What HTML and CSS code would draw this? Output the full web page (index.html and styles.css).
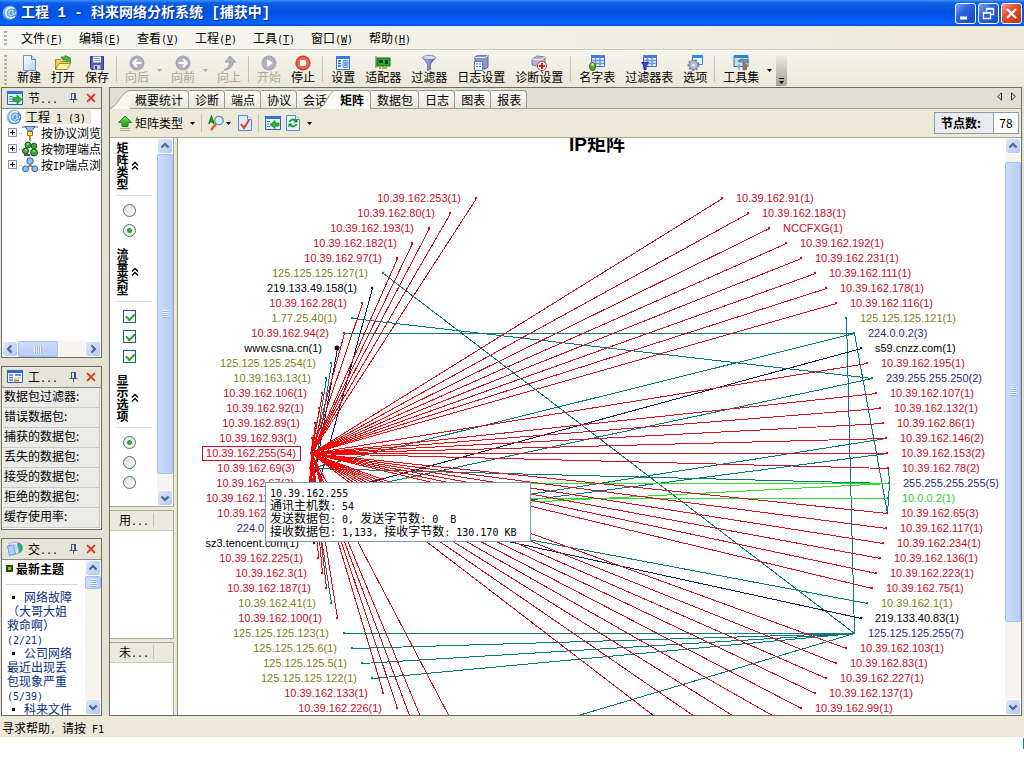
FILE: index.html
```html
<!DOCTYPE html>
<html lang="zh-CN">
<head>
<meta charset="utf-8">
<title>工程 1 - 科来网络分析系统</title>
<link rel="stylesheet" href="styles.css">
</head>
<body>
<svg class="defs" aria-hidden="true">
  <defs>
    <linearGradient id="gBlue" x1="0" y1="0" x2="1" y2="1"><stop offset="0" stop-color="#9fd8f8"/><stop offset="1" stop-color="#1f6fc4"/></linearGradient>
    <linearGradient id="gSteel" x1="0" y1="0" x2="1" y2="0"><stop offset="0" stop-color="#c9cdf0"/><stop offset="1" stop-color="#4a549c"/></linearGradient>
    <linearGradient id="gPage" x1="0" y1="0" x2="1" y2="1"><stop offset="0" stop-color="#fff"/><stop offset="1" stop-color="#b4d4f4"/></linearGradient>
    <linearGradient id="gGreen" x1="0" y1="0" x2="0" y2="1"><stop offset="0" stop-color="#7be05a"/><stop offset="1" stop-color="#1c9a1c"/></linearGradient>
    <radialGradient id="gGray"><stop offset="0" stop-color="#c9c5d0"/><stop offset="1" stop-color="#a5a2b4"/></radialGradient>
  </defs>
  <symbol id="i-globe" viewBox="0 0 16 16"><circle cx="8" cy="8" r="7.3" fill="url(#gBlue)"/><path d="M12 3.500C8 1 3 4 4 9s7 5 9 2" fill="none" stroke="#fff" stroke-width="1.300"/><path d="M11 6C9 4 6 6 7 9s4 2 4 0V5.500M11 9c1 2 3 0 2.500-2" fill="none" stroke="#e8f8ff"/></symbol>
  <symbol id="i-new" viewBox="0 0 16 16"><path d="M2.500.5h8l4 4v11h-12z" fill="url(#gPage)" stroke="#6f8fc0"/><path d="M10.500.5v4h4" fill="#dcecff" stroke="#5c7cb0"/></symbol>
  <symbol id="i-open" viewBox="0 0 16 16"><path d="M.5 14.500v-10h5l1 2h6v3" fill="#f2cf58" stroke="#a88424"/><path d="M.5 14.500l3.500-6h11.500l-3.500 6z" fill="#fff0a4" stroke="#b08c28"/><path d="M6 2h4V.5L15.500 3v5l-2-2-3-1H8z" fill="#4cb83c" stroke="#1c7a1c" stroke-width=".7"/></symbol>
  <symbol id="i-save" viewBox="0 0 16 16"><path d="M1.500 1.500h13v13h-12l-1-1z" fill="#5358b4" stroke="#343a88"/><path d="M4 1.500h8v6H4z" fill="#f2f3ff"/><path d="M5 3.500h6M5 5.500h6" stroke="#9498cc"/><path d="M4.500 10h7v4.500h-7z" fill="#c7cae8"/><path d="M6 11h2v3H6z" fill="#3a4090"/></symbol>
  <symbol id="i-back" viewBox="0 0 16 16"><circle cx="8" cy="8" r="7.500" fill="url(#gGray)"/><path d="M12.500 8H5M8 4L4.200 8 8 12" fill="none" stroke="#fff" stroke-width="2"/></symbol>
  <symbol id="i-fwd" viewBox="0 0 16 16"><circle cx="8" cy="8" r="7.500" fill="url(#gGray)"/><path d="M3.500 8H11M8 4l3.800 4L8 12" fill="none" stroke="#fff" stroke-width="2"/></symbol>
  <symbol id="i-up" viewBox="0 0 16 16"><path d="M9 1l6 6h-3c0 4-3 8-9 8 4-2 5.500-4 5.500-8H4z" fill="#b3b0c0" stroke="#918fa4" stroke-width=".8"/></symbol>
  <symbol id="i-play" viewBox="0 0 16 16"><circle cx="8" cy="8" r="7.500" fill="url(#gGray)"/><path d="M6 4l6 4-6 4z" fill="#fff"/></symbol>
  <symbol id="i-stop" viewBox="0 0 16 16"><circle cx="8" cy="8" r="7.600" fill="#d8452c"/><circle cx="8" cy="8" r="5.800" fill="#ee6a4c"/><rect x="5" y="5" width="6" height="6" rx="1" fill="#fff"/></symbol>
  <symbol id="i-set" viewBox="0 0 16 16"><path d="M1.500 1.500h13v13h-13z" fill="#fff" stroke="#2a78cc"/><path d="M1 1h14v3H1z" fill="#2f7ee0"/><path d="M3 6h3M3 8.500h3M3 11h3" stroke="#2360b4" stroke-width="1.500"/><path d="M8 5.500h5v7H8z" fill="#b8d8fa" stroke="#5b94dc"/><path d="M9 8h3M9 10h3" stroke="#2f6ec0"/></symbol>
  <symbol id="i-nic" viewBox="0 0 16 16"><path d="M1 1v12" stroke="#888" stroke-width="1.500"/><path d="M2 3h13v8H2z" fill="#2fa43a" stroke="#106a1c"/><path d="M4 5h4v3H4zM10 5h3v4h-3z" fill="#143f1b"/><path d="M4 12h2v2H4zM7 12h5v2H7z" fill="#c8a430"/></symbol>
  <symbol id="i-filter" viewBox="0 0 16 16"><path d="M1.500 2.500L6.500 9v6.500l3-1V9l5-6.500z" fill="url(#gSteel)" stroke="#4d5796" stroke-width=".7"/><ellipse cx="8" cy="2.500" rx="6.600" ry="2" fill="#dfe2fa" stroke="#6870a8" stroke-width=".8"/></symbol>
  <symbol id="i-log" viewBox="0 0 16 16"><path d="M2 2l3-2h10v12l-3 2H2z" fill="#8e97cc" stroke="#5b659f"/><path d="M2 2.500h10l3-2" fill="none" stroke="#e4e7fa"/><path d="M1.500 6.500h8v9h-8z" fill="#fff" stroke="#3c84d4"/><path d="M3 9h2M3 11.500h2M6 9h2M6 11.500h2" stroke="#2f6ec0"/></symbol>
  <symbol id="i-diag" viewBox="0 0 16 16"><path d="M1 4l5-3 8 1v8l-5 2-8-2z" fill="#aeb0cc" stroke="#797ca4"/><path d="M1 4l8 1 5-3" fill="none" stroke="#eceefa"/><circle cx="11" cy="11" r="4.500" fill="#fff" stroke="#c03c3c"/><path d="M11 8v6M8 11h6" stroke="#e02020" stroke-width="2"/></symbol>
  <symbol id="i-table" viewBox="0 0 16 16"><path d="M2.500.5h13v11h-13z" fill="#e9f1ff" stroke="#3f6cc8"/><path d="M2 0h14v3H2z" fill="#4b7bdc"/><path d="M3 5.500h12M3 8.500h12M6.500 3v8M11 3v8" stroke="#6f96e0" stroke-width="1.500"/></symbol>
  <symbol id="i-names" viewBox="0 0 16 16"><use href="#i-table"/><ellipse cx="3.500" cy="11.500" rx="3" ry="4" fill="#58a838" stroke="#276814"/><circle cx="3.500" cy="9.500" r="1.400" fill="#f4e060"/></symbol>
  <symbol id="i-ftable" viewBox="0 0 16 16"><use href="#i-table"/><path d="M.5 7.500h7L5 10.500v4H3v-4z" fill="#4048d0" stroke="#1c2290"/></symbol>
  <symbol id="i-opts" viewBox="0 0 16 16"><path d="M5.500.5h10v9h-10z" fill="#e6f2ff" stroke="#2f7ee0"/><path d="M5 0h11v3H5z" fill="#2f8df0"/><circle cx="6.500" cy="10" r="5" fill="none" stroke="#7c7ea4" stroke-width="2" stroke-dasharray="2 1.500"/><circle cx="6.500" cy="10" r="4.500" fill="#b4b6d0" stroke="#8184a8"/><circle cx="6.500" cy="10" r="1.500" fill="#eef"/></symbol>
  <symbol id="i-tools" viewBox="0 0 16 16"><path d="M1 .5h14v11H1z" fill="#b9e2fb" stroke="#2f78c0"/><path d="M1 0h14v3H1z" fill="#2f88cc"/><path d="M5 6l3-2 7 1v3l-3-1v8h-2V7H6z" fill="#8a8f98" stroke="#565c68" stroke-width=".7"/><path d="M13 9v6" stroke="#c86030" stroke-width="2"/><path d="M6 9v6" stroke="#9aa0aa" stroke-width="1.500"/></symbol>
  <symbol id="i-node" viewBox="0 0 16 16"><path d="M.5 1.500h15v13H.5z" fill="#dff0ff" stroke="#2f62b4"/><path d="M0 1h16v3H0z" fill="#2f78d8"/><path d="M2 6.500h4M2 9h4M2 11.500h4" stroke="#3898a0"/><path d="M6 7.500h4V5l5 4.500-5 4.500v-2.500H6z" fill="#30b030" stroke="#147a1a" stroke-width=".7"/></symbol>
  <symbol id="i-nodel" viewBox="0 0 16 16"><path d="M.5 1.500h15v13H.5z" fill="#dff0ff" stroke="#2f62b4"/><path d="M0 1h16v3H0z" fill="#2f78d8"/><path d="M2 6.500h3M2 9h2M2 11.500h3" stroke="#3070c0"/><path d="M14 8h-4V5.500L5 9.500l5 4V11h4z" fill="#30b030" stroke="#147a1a" stroke-width=".7"/></symbol>
  <symbol id="i-project" viewBox="0 0 16 16"><path d="M.5 1.500h15v12H.5z" fill="#fff" stroke="#2f62b4"/><path d="M0 1h16v3H0z" fill="#2f68c8"/><path d="M2 6h4M2 8.500h4M2 11h4" stroke="#3a7ad8" stroke-width="1.500"/><path d="M8 6h6" stroke="#5e9ae4" stroke-width="2"/><path d="M7 9h7" stroke="#a8c8f0"/><path d="M7 11.500h5" stroke="#e07028" stroke-width="2"/></symbol>
  <symbol id="i-forum" viewBox="0 0 16 16"><circle cx="10" cy="7" r="5.800" fill="#3ca878"/><path d="M2 2l8-1 2 11-7 2z" fill="#dcecff" stroke="#8cb0e0"/><path d="M.5 5l6-1 2 9-6 1.500z" fill="#b4d0f8" stroke="#6c98dc"/><path d="M5 4h4M5 6h5M6 8h4" stroke="#9cbce6"/></symbol>
  <symbol id="i-proto" viewBox="0 0 16 16"><path d="M0 2h5M11 2h5" stroke="#4060a0"/><path d="M3 1.500h10L9.500 6h-3z" fill="#a8b8f0" stroke="#3c5cb0"/><path d="M5.500 6.500h5v4h-5z" fill="#ffe060" stroke="#907018"/><path d="M8 10v6" stroke="#c09018" stroke-width="2"/></symbol>
  <symbol id="i-phys" viewBox="0 0 16 16"><g fill="#38a838" stroke="#10601a"><circle cx="6" cy="4" r="3"/><circle cx="12" cy="5" r="2.800"/><circle cx="3.500" cy="10" r="3"/><circle cx="12" cy="11.500" r="3.500"/></g><path d="M5 3h2M3 9h2M11 10h2" stroke="#c8ffc0"/><path d="M2 14h6" stroke="#705030" stroke-width="2"/></symbol>
  <symbol id="i-ip" viewBox="0 0 16 16"><path d="M8 7v3M8 8l-4 3M8 8l5 3" stroke="#c08030" stroke-width="1.500"/><g fill="#8fc0f8" stroke="#2c5ca8"><rect x="5" y="1" width="6" height="6" rx="2"/><rect x=".8" y="9" width="5.500" height="5.500" rx="2"/><rect x="10" y="9" width="5.500" height="5.500" rx="2"/></g></symbol>
  <symbol id="i-tree" viewBox="0 0 12 12"><path d="M1.500 1.500h8v8h-8z" fill="#fff" stroke="#8494a8"/><path d="M3 5.500h5M5.500 3v5" stroke="#000"/></symbol>
  <symbol id="i-pin" viewBox="0 0 9 10"><path d="M2 .5h5M2.500 1v5M5.500 1v5M6.500 1v5M.5 6.500h8M4.500 7v3" stroke="#3c5488" fill="none"/></symbol>
  <symbol id="i-x" viewBox="0 0 9 9"><path d="M1 1l7 7M8 1L1 8" stroke="#e03410" stroke-width="1.700"/></symbol>
  <symbol id="i-green" viewBox="0 0 14 16"><path d="M7 1l6.500 6.500H10v4H4v-4H.5z" fill="url(#gGreen)" stroke="#148414"/><path d="M2 13.500h10M2 15.500h10" stroke="#a0a8a0"/></symbol>
  <symbol id="i-find" viewBox="0 0 16 16"><path d="M1 9L3.500 2 6 9M2 6.500h3" stroke="#188018" stroke-width="1.800" fill="none"/><path d="M8 9l-5 6" stroke="#d06030" stroke-width="2.500"/><circle cx="11" cy="5.500" r="4.200" fill="#d0efff" stroke="#6090b0" stroke-width="1.300"/></symbol>
  <symbol id="i-check" viewBox="0 0 14 16"><path d="M.5.5h9l4 4v11H.5z" fill="#dcecff" stroke="#5888d0"/><path d="M9.500.5v4h4" fill="#fff" stroke="#5888d0"/><path d="M3 9l3 4 5-8" fill="none" stroke="#e03820" stroke-width="2"/></symbol>
  <symbol id="i-refresh" viewBox="0 0 14 16"><path d="M.5.5h9l4 4v11H.5z" fill="#e6f3ff" stroke="#5888d0"/><path d="M9.500.5v4h4" fill="#fff" stroke="#5888d0"/><path d="M3.500 7c1-3 5-3 6-1M10.500 9c-1 3-5 3-6 1" fill="none" stroke="#20a020" stroke-width="2"/><path d="M11.500 3.500v4h-4zM2.500 12.500v-4h4z" fill="#189018"/></symbol>
  <symbol id="i-caret" viewBox="0 0 5 3"><path d="M0 0h5L2.500 3z" fill="currentColor"/></symbol>
  <symbol id="i-cu" viewBox="0 0 10 10"><path d="M1.500 6.500L5 3l3.500 3.500" fill="none" stroke="#4d6185" stroke-width="2"/></symbol>
  <symbol id="i-cd" viewBox="0 0 10 10"><path d="M1.500 3.500L5 7l3.500-3.500" fill="none" stroke="#4d6185" stroke-width="2"/></symbol>
  <symbol id="i-cl" viewBox="0 0 10 10"><path d="M6.500 1.500L3 5l3.500 3.500" fill="none" stroke="#4d6185" stroke-width="2"/></symbol>
  <symbol id="i-cr" viewBox="0 0 10 10"><path d="M3.500 1.500L7 5 3.500 8.500" fill="none" stroke="#4d6185" stroke-width="2"/></symbol>
  <symbol id="i-chev" viewBox="0 0 8 10"><path d="M1 4.500l3-3 3 3M1 8.500l3-3 3 3" fill="none" stroke="#000" stroke-width="1.300"/></symbol>
</svg>

<header class="titlebar">
  <svg class="icon16"><use href="#i-globe"/></svg>
  <h1 class="titlebar-text">工程 1 - 科来网络分析系统 [捕获中]</h1>
  <div class="winbtns">
    <button class="winbtn" aria-label="最小化"><svg viewBox="0 0 19 19"><path d="M4 14h7" stroke="#fff" stroke-width="3"/></svg></button>
    <button class="winbtn" aria-label="还原"><svg viewBox="0 0 19 19"><path d="M7.500 7V4.500h7v6H12M7 5h8M4.500 8.500h7v6h-7zM4 9h8" fill="none" stroke="#fff" stroke-width="1.300"/></svg></button>
    <button class="winbtn winbtn-close" aria-label="关闭"><svg viewBox="0 0 19 19"><path d="M5 5l9 9M14 5l-9 9" stroke="#fff" stroke-width="2.200"/></svg></button>
  </div>
</header>

<nav class="menubar">
  <span class="grip"></span>
  <button class="menu">文件<span class="hw">(<u>F</u>)</span></button>
  <button class="menu">编辑<span class="hw">(<u>E</u>)</span></button>
  <button class="menu">查看<span class="hw">(<u>V</u>)</span></button>
  <button class="menu">工程<span class="hw">(<u>P</u>)</span></button>
  <button class="menu">工具<span class="hw">(<u>T</u>)</span></button>
  <button class="menu">窗口<span class="hw">(<u>W</u>)</span></button>
  <button class="menu">帮助<span class="hw">(<u>H</u>)</span></button>
</nav>

<div class="toolbar">
  <span class="grip"></span>
  <button class="tool"><svg class="icon16"><use href="#i-new"/></svg>新建</button>
  <button class="tool"><svg class="icon16"><use href="#i-open"/></svg>打开</button>
  <button class="tool"><svg class="icon16"><use href="#i-save"/></svg>保存</button>
  <span class="sep"></span>
  <button class="tool" disabled><svg class="icon16"><use href="#i-back"/></svg>向后</button>
  <button class="drop" disabled aria-label="向后列表"><svg class="caret"><use href="#i-caret"/></svg></button>
  <button class="tool" disabled><svg class="icon16"><use href="#i-fwd"/></svg>向前</button>
  <button class="drop" disabled aria-label="向前列表"><svg class="caret"><use href="#i-caret"/></svg></button>
  <button class="tool" disabled><svg class="icon16"><use href="#i-up"/></svg>向上</button>
  <span class="sep"></span>
  <button class="tool" disabled><svg class="icon16"><use href="#i-play"/></svg>开始</button>
  <button class="tool"><svg class="icon16"><use href="#i-stop"/></svg>停止</button>
  <span class="sep"></span>
  <button class="tool"><svg class="icon16"><use href="#i-set"/></svg>设置</button>
  <button class="tool"><svg class="icon16"><use href="#i-nic"/></svg>适配器</button>
  <button class="tool"><svg class="icon16"><use href="#i-filter"/></svg>过滤器</button>
  <button class="tool"><svg class="icon16"><use href="#i-log"/></svg>日志设置</button>
  <button class="tool"><svg class="icon16"><use href="#i-diag"/></svg>诊断设置</button>
  <span class="sep"></span>
  <button class="tool"><svg class="icon16"><use href="#i-names"/></svg>名字表</button>
  <button class="tool"><svg class="icon16"><use href="#i-ftable"/></svg>过滤器表</button>
  <button class="tool"><svg class="icon16"><use href="#i-opts"/></svg>选项</button>
  <span class="sep"></span>
  <button class="tool"><svg class="icon16"><use href="#i-tools"/></svg>工具集</button>
  <button class="drop" aria-label="工具集列表"><svg class="caret"><use href="#i-caret"/></svg></button>
  <button class="overflow" aria-label="更多按钮"><svg viewBox="0 0 7 6"><path d="M1 .5h5" stroke="#000"/><path d="M1 3h5L3.500 6z"/></svg></button>
</div>

<main class="workspace">
  <aside class="dock">
    <section class="panel panel-grow">
      <header class="panel-head"><svg class="icon16"><use href="#i-node"/></svg><h2>节<span class="hw">...</span></h2>
        <button class="mini" aria-label="固定"><svg class="pin"><use href="#i-pin"/></svg></button><button class="mini" aria-label="关闭"><svg class="x"><use href="#i-x"/></svg></button></header>
      <ul class="tree">
        <li class="root"><svg class="icon16"><use href="#i-globe"/></svg><span class="picked">工程<span class="hw"> 1 (3)</span></span></li>
        <li class="leaf"><svg class="plus"><use href="#i-tree"/></svg><span class="dots"></span><svg class="icon16"><use href="#i-proto"/></svg><span>按协议浏览</span></li>
        <li class="leaf"><svg class="plus"><use href="#i-tree"/></svg><span class="dots"></span><svg class="icon16"><use href="#i-phys"/></svg><span>按物理端点</span></li>
        <li class="leaf"><svg class="plus"><use href="#i-tree"/></svg><span class="dots"></span><svg class="icon16"><use href="#i-ip"/></svg><span>按<span class="hw">IP</span>端点浏</span></li>
      </ul>
      <div class="hscroll">
        <button class="sbtn" aria-label="向左"><svg><use href="#i-cl"/></svg></button>
        <span class="hthumb"><i></i></span>
        <button class="sbtn" aria-label="向右"><svg><use href="#i-cr"/></svg></button>
      </div>
    </section>

    <section class="panel">
      <header class="panel-head"><svg class="icon16"><use href="#i-project"/></svg><h2>工<span class="hw">...</span></h2>
        <button class="mini" aria-label="固定"><svg class="pin"><use href="#i-pin"/></svg></button><button class="mini" aria-label="关闭"><svg class="x"><use href="#i-x"/></svg></button></header>
      <ul class="facts">
        <li>数据包过滤器:</li><li>错误数据包:</li><li>捕获的数据包:</li><li>丢失的数据包:</li><li>接受的数据包:</li><li>拒绝的数据包:</li><li>缓存使用率:</li>
      </ul>
    </section>

    <section class="panel panel-forum">
      <header class="panel-head"><svg class="icon16"><use href="#i-forum"/></svg><h2>交<span class="hw">...</span></h2>
        <button class="mini" aria-label="固定"><svg class="pin"><use href="#i-pin"/></svg></button><button class="mini" aria-label="关闭"><svg class="x"><use href="#i-x"/></svg></button></header>
      <div class="forum">
        <div class="topics">
          <h3><i class="bullet"></i>最新主题</h3>
          <ul>
            <li><a href="#t1">网络故障（大哥大姐救命啊）<span class="hw">(2/21)</span></a></li>
            <li><a href="#t2">公司网络最近出现丢包现象严重<span class="hw">(5/39)</span></a></li>
            <li><a href="#t3">科来文件</a></li>
          </ul>
        </div>
        <div class="vscroll">
          <button class="sbtn" aria-label="向上"><svg><use href="#i-cu"/></svg></button>
          <span class="vthumb vthumb-short"><i></i></span>
          <button class="sbtn sbtn-end" aria-label="向下"><svg><use href="#i-cd"/></svg></button>
        </div>
      </div>
    </section>
  </aside>

  <section class="view">
    <div class="tabs" role="tablist">
      <button class="tab tab-first" role="tab"><svg class="slant" viewBox="0 0 20 19"><path d="M0 19C8 16 12 1 20 .5V19z" fill="#f8f8f3"/><path d="M0 18.500C8 16 12 1 20 .5" fill="none" stroke="#9b9b90"/></svg>概要统计</button>
      <button class="tab" role="tab">诊断</button>
      <button class="tab" role="tab">端点</button>
      <button class="tab" role="tab">协议</button>
      <button class="tab tab-before" role="tab">会话</button>
      <button class="tab tab-on" role="tab" aria-selected="true"><svg class="slant" viewBox="0 0 20 19"><path d="M4 19C11 16 14 1 20 .5V19z" fill="#fbfbf8"/><path d="M4 18.500C11 16 14 1 20 .5" fill="none" stroke="#9b9b90"/></svg>矩阵</button>
      <button class="tab" role="tab">数据包</button>
      <button class="tab" role="tab">日志</button>
      <button class="tab" role="tab">图表</button>
      <button class="tab" role="tab">报表</button>
      <span class="tabnav">
        <button aria-label="上一页"><svg viewBox="0 0 5 9"><path d="M4.500.8v7.400L.8 4.500z" fill="none" stroke="#222"/></svg></button>
        <button aria-label="下一页"><svg viewBox="0 0 5 9"><path d="M.5.8v7.400l3.700-3.700z" fill="none" stroke="#222"/></svg></button>
      </span>
    </div>

    <div class="viewbar">
      <button class="vb"><svg class="icon14"><use href="#i-green"/></svg>矩阵类型<svg class="caret vb-caret"><use href="#i-caret"/></svg></button>
      <span class="sep"></span>
      <button class="vb vb-find" aria-label="查找"><svg class="icon16"><use href="#i-find"/></svg><svg class="caret"><use href="#i-caret"/></svg></button>
      <button class="vb" aria-label="选择"><svg class="icon14"><use href="#i-check"/></svg></button>
      <span class="sep"></span>
      <button class="vb" aria-label="定位"><svg class="icon16"><use href="#i-nodel"/></svg></button>
      <button class="vb" aria-label="刷新"><svg class="icon14"><use href="#i-refresh"/></svg><svg class="caret vb-caret"><use href="#i-caret"/></svg></button>
      <div class="counter"><strong>节点数:</strong><output>78</output></div>
    </div>

    <div class="content">
      <div class="side">
        <div class="options">
          <div class="groups">
            <fieldset class="group"><legend><span>矩阵类型</span><svg class="chev"><use href="#i-chev"/></svg></legend>
              <label><input type="radio" name="kind" aria-label="物理矩阵"></label><label><input type="radio" name="kind" aria-label="IP矩阵" checked></label></fieldset>
            <fieldset class="group"><legend><span>流量类型</span><svg class="chev"><use href="#i-chev"/></svg></legend>
              <label><input type="checkbox" aria-label="单播" checked></label><label><input type="checkbox" aria-label="组播" checked></label><label><input type="checkbox" aria-label="广播" checked></label></fieldset>
            <fieldset class="group"><legend><span>显示选项</span><svg class="chev"><use href="#i-chev"/></svg></legend>
              <label><input type="radio" name="show" aria-label="全部" checked></label><label><input type="radio" name="show" aria-label="选中"></label><label><input type="radio" name="show" aria-label="隐藏"></label></fieldset>
          </div>
          <div class="vscroll">
            <button class="sbtn" aria-label="向上"><svg><use href="#i-cu"/></svg></button>
            <span class="vthumb vthumb-side"><i></i></span>
            <button class="sbtn sbtn-end" aria-label="向下"><svg><use href="#i-cd"/></svg></button>
          </div>
        </div>
        <div class="list"><div class="list-head"><span>用<span class="hw">...</span></span></div></div>
        <div class="list list-low"><div class="list-head"><span>未<span class="hw">...</span></span></div></div>
      </div>

      <div class="chart">
        <svg class="graph" role="img" aria-label="IP矩阵">
          <defs>
            <radialGradient id="hubRed" gradientUnits="userSpaceOnUse" cx="311" cy="453" r="180"><stop offset="0" stop-color="#ff0000"/><stop offset=".5" stop-color="#f00808"/><stop offset="1" stop-color="#cc1424"/></radialGradient>
          </defs>
          <g transform="translate(-178 -138)">
            <text class="graph-title" x="569" y="151">IP矩阵</text>
            <g id="edges"></g>
            <g id="nodes"></g>
            <rect class="selected" x="202.500" y="446.500" width="98" height="14"/>
          </g>
        </svg>
        <div class="tip">
          <p><span class="hw">10.39.162.255</span></p>
          <p>通讯主机数<span class="hw">: 54</span></p>
          <p>发送数据包<span class="hw">: 0, </span>发送字节数<span class="hw">: 0  B</span></p>
          <p>接收数据包<span class="hw">: 1,133, </span>接收字节数<span class="hw">: 130.170 KB</span></p>
        </div>
      </div>
      <div class="vscroll">
        <button class="sbtn" aria-label="向上"><svg><use href="#i-cu"/></svg></button>
        <span class="vthumb vthumb-main"><i></i></span>
        <button class="sbtn sbtn-end" aria-label="向下"><svg><use href="#i-cd"/></svg></button>
      </div>
    </div>
  </section>
</main>

<footer class="status">寻求帮助<span class="hw">, </span>请按<span class="hw"> F1</span></footer>
<div class="desktop"><span class="desktop-mark"></span></div>
<script src="matrix.js"></script>
</body>
</html>
```

FILE: matrix.js
```javascript
// Each column lists nodes from top to bottom: dot x, label, colour class.
// A node with no label lies below the visible part of the canvas.
const ROW = 15;
const TOP = 198;

const left = [
  [476, '10.39.162.253(1)', 'r'], [450, '10.39.162.80(1)', 'r'], [429, '10.39.162.193(1)', 'r'],
  [412, '10.39.162.182(1)', 'r'], [397, '10.39.162.97(1)', 'r'], [383, '125.125.125.127(1)', 'o'],
  [372, '219.133.49.158(1)', 'k'], [362, '10.39.162.28(1)', 'r'], [352, '1.77.25.40(1)', 'o'],
  [344, '10.39.162.94(2)', 'r'], [337, 'www.csna.cn(1)', 'k'], [331, '125.125.125.254(1)', 'o'],
  [326, '10.39.163.13(1)', 'o'], [322, '10.39.162.106(1)', 'r'], [319, '10.39.162.92(1)', 'r'],
  [315, '10.39.162.89(1)', 'r'], [312, '10.39.162.93(1)', 'r'], [311, '10.39.162.255(54)', 'r'],
  [310, '10.39.162.69(3)', 'r'], [309, '10.39.162.67(3)', 'r'], [310, '10.39.162.119(16)', 'r'],
  [310, '10.39.162.59(2)', 'r'], [311, '224.0.0.5(2)', 'b'], [314, 'sz3.tencent.com(1)', 'k'],
  [318, '10.39.162.225(1)', 'r'], [322, '10.39.162.3(1)', 'r'], [326, '10.39.162.187(1)', 'r'],
  [331, '10.39.162.41(1)', 'o'], [337, '10.39.162.100(1)', 'r'], [344, '125.125.125.123(1)', 'o'],
  [352, '125.125.125.6(1)', 'o'], [362, '125.125.125.5(1)', 'o'], [372, '125.125.125.122(1)', 'o'],
  [383, '10.39.162.133(1)', 'r'], [397, '10.39.162.226(1)', 'r'], [412, '', 'r'],
  [429, '', 'r'], [450, '', 'o'], [476, '', 'r']
];

const right = [
  [722, '10.39.162.91(1)', 'r'], [748, '10.39.162.183(1)', 'r'], [769, 'NCCFXG(1)', 'r'],
  [786, '10.39.162.192(1)', 'r'], [801, '10.39.162.231(1)', 'r'], [815, '10.39.162.111(1)', 'r'],
  [826, '10.39.162.178(1)', 'r'], [836, '10.39.162.116(1)', 'r'], [846, '125.125.125.121(1)', 'o'],
  [854, '224.0.0.2(3)', 'b'], [861, 's59.cnzz.com(1)', 'k'], [867, '10.39.162.195(1)', 'r'],
  [872, '239.255.255.250(2)', 'b'], [876, '10.39.162.107(1)', 'r'], [880, '10.39.162.132(1)', 'r'],
  [883, '10.39.162.86(1)', 'r'], [886, '10.39.162.146(2)', 'r'], [887, '10.39.162.153(2)', 'r'],
  [888, '10.39.162.78(2)', 'r'], [889, '255.255.255.255(5)', 'b'], [888, '10.0.0.2(1)', 'g'],
  [887, '10.39.162.65(3)', 'r'], [886, '10.39.162.117(1)', 'r'], [883, '10.39.162.234(1)', 'r'],
  [880, '10.39.162.136(1)', 'r'], [876, '10.39.162.223(1)', 'r'], [872, '10.39.162.75(1)', 'r'],
  [867, '10.39.162.1(1)', 'o'], [861, '219.133.40.83(1)', 'k'], [854, '125.125.125.255(7)', 'b'],
  [846, '10.39.162.103(1)', 'r'], [836, '10.39.162.83(1)', 'r'], [826, '10.39.162.227(1)', 'r'],
  [815, '10.39.162.137(1)', 'r'], [801, '10.39.162.99(1)', 'r'], [786, '', 'r'],
  [769, '', 'r'], [748, '', 'r'], [722, '', 'r']
];

const HUB = { x: 311, y: 453 };

// Links that do not start at the hub: colour class, x1, y1, x2, y2.
const links = [
  ['teal', 383, 273, 854, 633], ['teal', 352, 318, 872, 378], ['teal', 344, 333, 854, 333],
  ['teal', 331, 363, 310, 498], ['teal', 326, 378, 309, 483], ['teal', 331, 603, 310, 468],
  ['teal', 854, 333, 310, 468], ['teal', 854, 333, 887, 513], ['teal', 846, 318, 854, 633],
  ['teal', 872, 378, 310, 498], ['teal', 886, 438, 311, 528], ['teal', 887, 453, 311, 528],
  ['teal', 888, 468, 889, 483], ['teal', 889, 483, 887, 513], ['teal', 889, 483, 310, 468],
  ['teal', 867, 603, 310, 498], ['teal', 344, 633, 854, 633], ['teal', 352, 648, 854, 633],
  ['teal', 362, 663, 854, 633], ['teal', 372, 678, 854, 633], ['teal', 450, 753, 854, 633],
  ['navy', 372, 288, 310, 513], ['navy', 337, 348, 310, 498], ['navy', 861, 348, 310, 498],
  ['navy', 861, 618, 310, 498], ['navy', 314, 543, 310, 498],
  ['lime', 889, 483, 309, 483], ['lime', 889, 483, 310, 513], ['lime', 888, 498, 310, 498]
];

const NS = 'http://www.w3.org/2000/svg';
const edges = document.getElementById('edges');
const nodes = document.getElementById('nodes');

function add(parent, name, attrs, text) {
  const el = document.createElementNS(NS, name);
  for (const key in attrs) el.setAttribute(key, attrs[key]);
  if (text) el.textContent = text;
  parent.appendChild(el);
}

function line(cls, x1, y1, x2, y2) {
  add(edges, 'path', { class: 'edge ' + cls, d: `M${x1 + 0.5} ${y1 + 0.5}L${x2 + 0.5} ${y2 + 0.5}` });
}

function column(list, side) {
  list.forEach(([x, label, tone], i) => {
    const y = TOP + i * ROW;
    if (tone === 'r') line('red', HUB.x, HUB.y, x, y);
    add(nodes, 'circle', { class: 'dot-' + tone, cx: x, cy: y, r: label.startsWith('www') ? 2.5 : 1.2 });
    if (!label) return;
    add(nodes, 'text', {
      class: 'label label-' + tone,
      x: side === 'left' ? x - 15 : x + 14,
      y: y + 4,
      'text-anchor': side === 'left' ? 'end' : 'start'
    }, label);
  });
}

links.forEach(l => line(...l));
column(left, 'left');
column(right, 'right');
```

FILE: styles.css
```css
* { box-sizing: border-box; }
body {
  margin: 0;
  height: 100vh;
  min-height: 640px;
  display: flex;
  flex-direction: column;
  overflow: hidden;
  background: #fff;
  color: #000;
  font: 12px/14px "Noto Sans CJK SC", sans-serif;
}
button {
  margin: 0;
  padding: 0;
  border: 0;
  background: none;
  color: inherit;
  font: inherit;
}
svg { display: block; flex: none; }
h1, h2, h3, p, ul, fieldset { margin: 0; padding: 0; }
ul { list-style: none; }
.defs { position: absolute; width: 0; height: 0; }
.icon16 { width: 16px; height: 16px; }
.icon14 { width: 14px; height: 16px; }
.caret { width: 5px; height: 3px; }
.hw { font-family: "DejaVu Sans Mono", monospace; font-size: 10px; line-height: 1px; white-space: pre; }

/* title bar */
.titlebar {
  display: flex;
  align-items: center;
  gap: 3px;
  height: 26px;
  flex: none;
  padding: 0 2px;
  background: linear-gradient(#3f93fd 0, #0a5ee8 3px, #0053e1 12px, #0458f0 18px, #0565fe 23px, #0347cc 26px);
}
.titlebar-text {
  flex: 1;
  color: #fff;
  font: bold 14px/18px "Liberation Mono", "Noto Sans CJK SC", monospace;
  text-shadow: 1px 1px #0a2c80;
}
.winbtns { display: flex; gap: 2px; }
.winbtn {
  width: 21px;
  height: 21px;
  border: 1px solid #fff;
  border-radius: 3px;
  background: linear-gradient(135deg, #7ea6f8, #2b62e0 40%, #1a48c4);
}
.winbtn-close { background: linear-gradient(135deg, #f0a088, #e2502c 40%, #c43410); }

/* menu bar */
.menubar {
  display: flex;
  align-items: center;
  height: 24px;
  flex: none;
  padding-left: 4px;
  background: linear-gradient(90deg, #f6f6f2, #ece9d8);
  border-bottom: 1px solid #cfccba;
}
.grip {
  width: 3px;
  align-self: stretch;
  margin: 5px 5px 4px 0;
  background: repeating-linear-gradient(#b4b1a0 0 2px, transparent 2px 4px);
}
.menu { width: 58px; padding-left: 2px; }

/* main toolbar */
.toolbar {
  display: flex;
  align-items: stretch;
  height: 37px;
  flex: none;
  padding: 4px 0 1px 4px;
  background: linear-gradient(#f5f4ec, #ebe8d6);
  border-top: 1px solid #fff;
}
.toolbar .grip { margin: 0 5px 0 0; }
.tool {
  display: flex;
  flex-direction: column;
  align-items: center;
  padding: 0 5px;
  line-height: 12px;
  white-space: nowrap;
}
.tool:disabled, .drop:disabled { color: #aca899; }
.drop { width: 12px; padding: 0 3px; }
.sep { width: 1px; margin: 1px 3px 4px 2px; background: #c6c3b2; }
.overflow {
  width: 11px;
  display: flex;
  align-items: flex-end;
  justify-content: center;
  padding-bottom: 2px;
  border-radius: 0 3px 3px 0;
  background: linear-gradient(#edeade, #a4a294);
}
.overflow svg { width: 7px; height: 6px; }

/* workspace */
.workspace {
  flex: 1;
  min-height: 0;
  display: flex;
  gap: 7px;
  padding: 0 2px 0 1px;
  background: #e4e2d4;
}
.dock { width: 101px; flex: none; display: flex; flex-direction: column; gap: 8px; }
.panel {
  display: flex;
  flex-direction: column;
  overflow: hidden;
  border: 1px solid #6e6d64;
  background: #fff;
}
.panel-grow { flex: 1; min-height: 0; }
.panel-head {
  display: flex;
  align-items: center;
  height: 21px;
  flex: none;
  padding: 0 5px;
  background: #e6e4d8;
  border-bottom: 1px solid #8d8b7e;
}
.panel-head h2 { flex: 1; padding-left: 5px; font: 12px/14px "Noto Sans CJK SC", sans-serif; }
.mini { margin-left: 8px; }
.pin { width: 9px; height: 10px; }
.x { width: 10px; height: 10px; }

.tree { flex: 1; min-height: 0; }
.tree li { display: flex; align-items: center; height: 16px; white-space: nowrap; }
.root { padding-left: 4px; gap: 3px; }
.picked { padding-right: 5px; padding-left: 1px; background: #ece9d8; }
.leaf { padding-left: 5px; }
.leaf > span:last-child { padding-left: 3px; }
.plus { width: 12px; height: 12px; }
.dots { width: 7px; border-top: 1px dotted #a8a8a0; }

.facts { padding: 0 1px 1px; background: #fff; }
.facts li { height: 20px; padding: 1px 1px; background: #ebebea; border-bottom: 1px solid #cac9c2; border-right: 1px solid #cac9c2; }

.panel-forum { height: 178px; flex: none; }
.forum { flex: 1; min-height: 0; display: flex; }
.topics { flex: 1; min-width: 0; padding: 1px 7px 0 4px; overflow: hidden; }
.topics h3 { display: flex; align-items: center; gap: 3px; height: 24px; padding-bottom: 8px; border-bottom: 1px solid #d5d5dc; font: bold 12px/14px "Noto Sans CJK SC", sans-serif; white-space: nowrap; }
.bullet { width: 7px; height: 7px; border: 2px solid #33451c; background: #98cc30; }
.topics ul { padding-top: 5px; }
.topics li { width: 67px; padding-left: 1px; word-break: break-all; }
.topics li::before { content: ""; display: inline-block; width: 3px; height: 3px; margin: 0 9px 3px 5px; background: #000; }
.topics a { color: #0a3088; text-decoration: none; }

/* scroll bars */
.vscroll {
  width: 16px;
  flex: none;
  display: flex;
  flex-direction: column;
  align-items: stretch;
  background: #f5f4ee;
}
.hscroll { display: flex; height: 16px; flex: none; background: #f5f4ee; }
.hscroll .sbtn:last-child { margin-left: auto; }
.sbtn {
  width: 16px;
  height: 16px;
  flex: none;
  display: flex;
  align-items: center;
  justify-content: center;
  border: 1px solid #fff;
  border-radius: 3px;
  background: linear-gradient(135deg, #dce7fe, #b2c8f6);
}
.sbtn svg { width: 10px; height: 10px; }
.sbtn-end { margin-top: auto; }
.vthumb, .hthumb {
  display: flex;
  align-items: center;
  justify-content: center;
  border: 1px solid #a4bcf0;
  border-radius: 2px;
}
.vthumb { background: linear-gradient(90deg, #cddbfd, #b8cdfb); }
.hthumb { width: 40px; background: linear-gradient(#cddbfd, #b8cdfb); }
.vthumb i { width: 7px; height: 8px; background: repeating-linear-gradient(#f0f5ff 0 1px, #98b4ee 1px 2px); }
.hthumb i { width: 8px; height: 7px; background: repeating-linear-gradient(90deg, #f0f5ff 0 1px, #98b4ee 1px 2px); }
.vthumb-short { height: 13px; }
.vthumb-side { height: 320px; }
.vthumb-main { height: 460px; margin-top: 8px; }

/* main view */
.view {
  flex: 1;
  min-width: 0;
  display: flex;
  flex-direction: column;
  border: 1px solid #6e6d64;
  background: #ece9d8;
}
.tabs {
  display: flex;
  align-items: flex-end;
  height: 21px;
  flex: none;
  padding-left: 4px;
  background: #e1dfd3;
  border-bottom: 1px solid #9b9b90;
}
.tab {
  position: relative;
  height: 18px;
  padding: 0 5px 0 6px;
  border-top: 1px solid #9b9b90;
  border-right: 1px solid #9b9b90;
  border-radius: 0 4px 0 0;
  background: linear-gradient(#fbfbf8, #e9e7dc);
  line-height: 16px;
  white-space: nowrap;
}
.tab-first { margin-left: 16px; padding-left: 5px; }
.tab-before { padding-right: 7px; }
.tab-on { z-index: 1; height: 19px; margin-bottom: -1px; background: #fbfbf8; padding-left: 5px; padding-right: 6px; font-weight: bold; }
.slant { position: absolute; right: 100%; top: -1px; width: 20px; height: 19px; }
.tabnav { display: flex; gap: 9px; margin: 0 5px 7px auto; }
.tabnav svg { width: 5px; height: 9px; }
.viewbar {
  display: flex;
  align-items: center;
  height: 29px;
  flex: none;
  padding: 0 2px 0 8px;
  border-bottom: 1px solid #a9a796;
}
.vb { display: flex; align-items: center; gap: 3px; margin-right: 5px; }
.vb-find { gap: 2px; }
.vb-caret { margin-left: 4px; }
.viewbar .sep { height: 18px; margin: 0 6px 0 1px; }
.vb-find + .vb { margin-left: 2px; }
.counter { display: flex; margin-left: auto; height: 22px; border: 1px solid #8a9bb4; background: #e9ebee; }
.counter strong { width: 58px; padding: 3px 6px; white-space: nowrap; }
.counter output { width: 25px; padding: 3px 0; border-left: 1px solid #8a9bb4; background: #fff; text-align: center; }

.content { flex: 1; min-height: 0; display: flex; }
.side { width: 64px; flex: none; display: flex; flex-direction: column; gap: 3px; }
.options { flex: none; display: flex; background: #fff; border-right: 1px solid #a9a796; border-bottom: 1px solid #a9a796; }
.groups { flex: 1; padding: 4px 6px 6px; }
.group { border: 0; padding-bottom: 8px; min-width: 0; }
.group legend {
  display: flex;
  align-items: center;
  gap: 3px;
  width: 100%;
  padding: 0 0 5px;
  margin-bottom: 4px;
  border-bottom: 1px solid #dddbd0;
  font-weight: bold;
}
.group legend span { writing-mode: vertical-rl; line-height: 12px; }
.chev { width: 8px; height: 10px; }
.group label { display: flex; height: 20px; align-items: center; padding-left: 7px; }
.group input {
  appearance: none;
  width: 13px;
  height: 13px;
  margin: 0;
  border: 1px solid #2c5880;
  background: linear-gradient(135deg, #dcdcd7, #fff);
}
.group input[type="radio"] { border-radius: 50%; border-color: #4c6c8c; }
.group input[type="radio"]:checked { background: radial-gradient(circle, #2fa82f 0 2px, #eef4ee 3px); }
.group input[type="checkbox"]:checked { background: #fff; }
.group input[type="checkbox"]:checked::before {
  content: "";
  display: block;
  width: 7px;
  height: 4px;
  margin: 2px;
  border: solid #21a121;
  border-width: 0 0 2px 2px;
  rotate: -45deg;
}
.list { flex: 1; min-height: 0; background: #fff; border: 1px solid #a9a796; border-left: 0; }
.list-low { flex: 0 0 73px; border-bottom: 0; }
.list-head { height: 20px; padding: 2px 9px; background: #ebe9db; border-bottom: 1px solid #cbc8b6; }
.list-head > span { display: block; width: 35px; border-right: 1px solid #c6c3b2; }

.chart { position: relative; flex: 1; min-width: 0; margin-left: 3px; overflow: hidden; border-left: 1px solid #8d8b7e; background: #fff; }
.graph { width: 100%; height: 100%; }
.graph-title { font: bold 19px "Liberation Sans", "Noto Sans CJK SC", sans-serif; }
.edge { fill: none; stroke-width: 1; shape-rendering: crispEdges; }
.red { stroke: url(#hubRed); }
.teal { stroke: #0a7a78; }
.navy { stroke: #0a1e5c; }
.lime { stroke: #2ce02c; }
.label { font: 11px "Liberation Sans", Arial, sans-serif; }
.label-r { fill: #c80a24; }
.label-o { fill: #808018; }
.label-k { fill: #000; }
.label-b { fill: #2c2c84; }
.label-g { fill: #2ccc2c; }
.dot-r { fill: #c80a24; }
.dot-o, .dot-b, .dot-g { fill: #0a7a78; }
.dot-k { fill: #0a1230; }
.selected { fill: none; stroke: #c80a24; }
.tip {
  position: absolute;
  left: 87px;
  top: 344px;
  width: 266px;
  padding: 2px 4px 4px;
  border: 1px solid #7c98b4;
  background: #fff;
  line-height: 13px;
}
.tip p { white-space: nowrap; height: 13px; }

.status { height: 21px; flex: none; padding: 5px 2px 0; background: #ece9d8; line-height: 14px; }
.desktop { height: 31px; flex: none; display: flex; justify-content: flex-end; background: #fff; }
.desktop-mark { width: 1px; height: 11px; margin-top: 1px; background: #2c8090; }
```
